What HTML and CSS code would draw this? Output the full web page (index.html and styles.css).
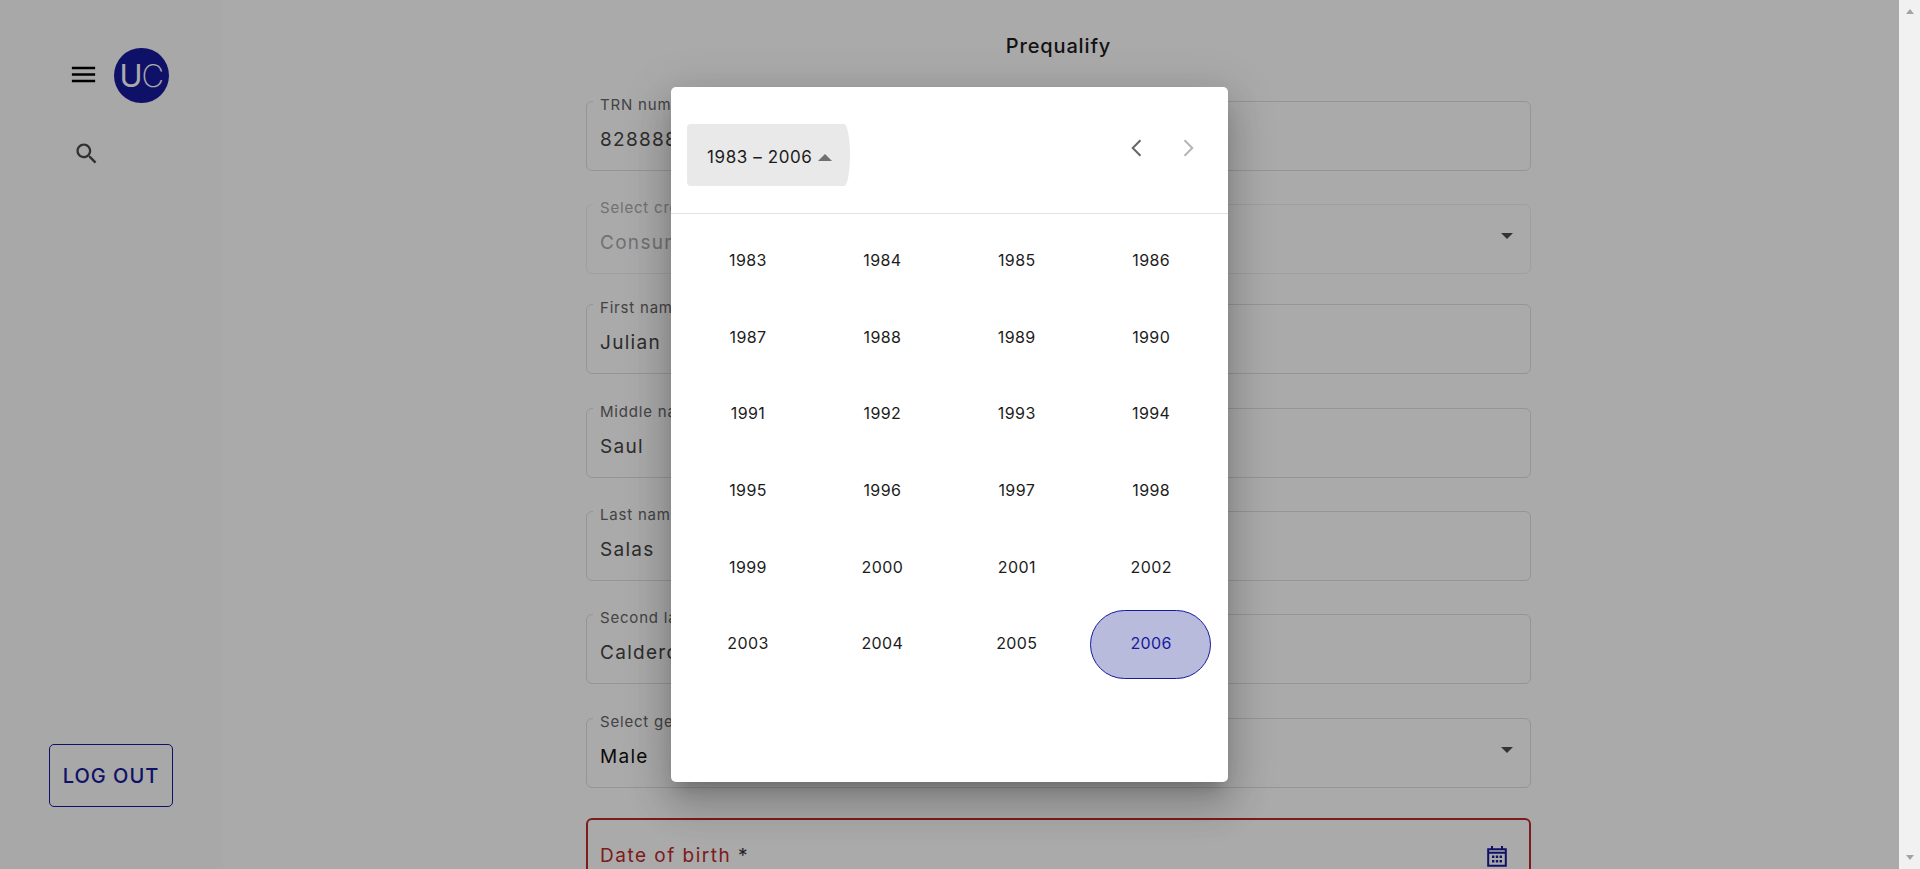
FILE: index.html
```html
<!DOCTYPE html>
<html lang="en">
<head>
<meta charset="utf-8">
<title>Prequalify</title>
<link rel="stylesheet" href="styles.css">
</head>
<body>
<div class="page">
  <aside class="sidebar">
    <div class="brand">
      <svg class="icon-menu" viewBox="0 0 24 24"><path d="M3 18h18v-2H3v2zm0-5h18v-2H3v2zm0-7v2h18V6H3z"/></svg>
      <div class="logo"><span class="logo-u">U</span><span class="logo-c">C</span></div>
    </div>
    <svg class="icon-search" viewBox="0 0 24 24"><path d="M15.5 14h-.79l-.28-.27C15.41 12.59 16 11.11 16 9.5 16 5.91 13.09 3 9.5 3S3 5.91 3 9.5 5.91 16 9.5 16c1.61 0 3.09-.59 4.23-1.57l.27.28v.79l5 4.99L20.49 19l-4.99-5zm-6 0C7.01 14 5 11.99 5 9.5S7.01 5 9.5 5 14 7.01 14 9.5 11.99 14 9.5 14z"/></svg>
    <button class="logout">LOG OUT</button>
  </aside>
  <main class="main">
    <h1 class="title">Prequalify</h1>
    <div class="field"><span class="field-label">TRN number *</span><span class="field-value">828888888</span></div>
    <div class="field field-select field-disabled"><span class="field-label">Select credit type</span><span class="field-value">Consumer</span><span class="caret-down"></span></div>
    <div class="field"><span class="field-label">First name *</span><span class="field-value">Julian</span></div>
    <div class="field"><span class="field-label">Middle name</span><span class="field-value">Saul</span></div>
    <div class="field"><span class="field-label">Last name *</span><span class="field-value">Salas</span></div>
    <div class="field"><span class="field-label">Second last name</span><span class="field-value">Calderon</span></div>
    <div class="field field-select"><span class="field-label">Select gender *</span><span class="field-value field-value-strong">Male</span><span class="caret-down"></span></div>
    <div class="field field-error">
      <span class="error-label">Date of birth <span class="required">*</span></span>
      <svg class="icon-calendar" viewBox="0 0 20 22"><path class="cal-line" d="M1.2 4.2h17.6v16.6H1.2zM1.2 7.8h17.6M5 1v3M15 1v3"/><path class="cal-dots" d="M5 10.5h2.4v2.4H5zM8.8 10.5h2.4v2.4H8.8zM12.6 10.5H15v2.4h-2.4zM5 15h2.4v2.4H5zM8.8 15h2.4v2.4H8.8zM12.6 15H15v2.4h-2.4z"/></svg>
    </div>
  </main>
  <div class="overlay">
    <div class="modal" role="dialog">
      <header class="modal-head">
        <button class="range-btn"><span>1983 – 2006</span><span class="caret-up"></span></button>
        <div class="nav">
          <svg class="chev chev-on" viewBox="0 0 24 24"><path d="M14.6 6.2 8.8 12l5.8 5.8"/></svg>
          <svg class="chev chev-off" viewBox="0 0 24 24"><path d="M9.4 6.2 15.2 12l-5.8 5.8"/></svg>
        </div>
      </header>
      <div class="years">
        <div class="year">1983</div><div class="year">1984</div><div class="year">1985</div><div class="year">1986</div>
        <div class="year">1987</div><div class="year">1988</div><div class="year">1989</div><div class="year">1990</div>
        <div class="year">1991</div><div class="year">1992</div><div class="year">1993</div><div class="year">1994</div>
        <div class="year">1995</div><div class="year">1996</div><div class="year">1997</div><div class="year">1998</div>
        <div class="year">1999</div><div class="year">2000</div><div class="year">2001</div><div class="year">2002</div>
        <div class="year">2003</div><div class="year">2004</div><div class="year">2005</div><div class="year year-selected">2006</div>
      </div>
    </div>
  </div>
</div>
<div class="scrollbar"><span class="sb-up"></span><span class="sb-down"></span></div>
</body>
</html>
```

FILE: styles.css
```css
* { box-sizing: border-box; }
html, body { height: 100%; }
body {
  margin: 0;
  display: flex;
  height: 869px;
  overflow: hidden;
  background: #fff;
  color: #1c1c1c;
  font-family: Inter, "Liberation Sans", sans-serif;
}
.page {
  position: relative;
  flex: 1;
  display: flex;
  height: 869px;
  overflow: hidden;
}
.sidebar {
  width: 223px;
  flex: none;
  display: flex;
  flex-direction: column;
  align-items: flex-start;
  padding: 48px 0 62px 49px;
  background: #fcfcfc;
}
.brand { display: flex; align-items: center; margin-left: 19px; gap: 15px; }
.icon-menu { width: 31px; height: 31px; margin-bottom: 2px; fill: #000; }
.logo {
  width: 54.5px;
  height: 55px;
  border-radius: 50%;
  background: #161a9b;
  color: #fff;
  display: flex;
  align-items: center;
  justify-content: center;
  font-size: 31px;
  letter-spacing: -1px;
}
.logo-u { font-weight: 400; }
.logo-c { font-weight: 200; }
.icon-search { width: 27.4px; height: 27.4px; margin: 37px 0 0 23.6px; fill: #4a4a4a; }
.logout {
  margin-top: auto;
  width: 124px;
  height: 63px;
  padding: 0;
  border: 1px solid #161a9b;
  border-radius: 5px;
  background: transparent;
  color: #161a9b;
  font: 500 20px Inter, "Liberation Sans", sans-serif;
  letter-spacing: 1px;
}
.main { flex: 1; padding: 34px 368px 0 363px; }
.title {
  margin: 0 0 43px;
  font-size: 20px;
  line-height: 24px;
  font-weight: 500;
  letter-spacing: .85px;
  text-align: center;
}
.field {
  position: relative;
  height: 70px;
  margin-bottom: 33.35px;
  padding: 26px 13px 0;
  border: 1px solid #e0e0e0;
  border-radius: 6px;
  display: block;
}
.field-select { margin-bottom: 30px; }
.field-disabled { border-color: #efefef; }
.field-label {
  position: absolute;
  left: 6px;
  top: -6px;
  padding: 0 7px;
  background: #fff;
  font-size: 15px;
  line-height: 18px;
  letter-spacing: .8px;
  color: #666;
}
.field-value {
  display: block;
  font-size: 19px;
  line-height: 24px;
  letter-spacing: 1.3px;
  color: #444;
}
.field-value-strong { color: #111; }
.field-disabled .field-label { color: #aaa; }
.field-disabled .field-value { color: #aaa; }
.caret-down {
  position: absolute;
  right: 17px;
  top: 28px;
  border-left: 6px solid transparent;
  border-right: 6px solid transparent;
  border-top: 6px solid #4d4d4d;
}
.field-error {
  border: 2px solid #bb2a2a;
  padding: 24px 12px 0;
  display: flex;
  justify-content: space-between;
  align-items: flex-start;
  overflow: visible;
}
.error-label { font-size: 19px; line-height: 24px; letter-spacing: 1.5px; color: #bb2a2a; }
.required { color: #333; }
.icon-calendar { width: 20px; height: 22px; margin: 1px 10px 0 0; flex: none; }
.cal-line { fill: none; stroke: #161a9b; stroke-width: 2; }
.cal-dots { fill: #161a9b; }
.overlay {
  position: absolute;
  inset: 0;
  display: flex;
  align-items: center;
  justify-content: center;
  background: rgba(0, 0, 0, .333);
}
.modal {
  width: 557px;
  height: 695px;
  background: #fff;
  border-radius: 5px;
  box-shadow: 0 11px 15px -7px rgba(0,0,0,.2), 0 24px 38px 3px rgba(0,0,0,.14), 0 9px 46px 8px rgba(0,0,0,.12);
}
.modal-head {
  height: 127px;
  padding: 37px 24px 0 16px;
  border-bottom: 1px solid #e2e2e2;
  display: flex;
  justify-content: space-between;
  align-items: flex-start;
}
.range-btn {
  width: 163px;
  height: 62px;
  padding: 4px 0 0 20px;
  border: 0;
  background: #e9e9e9;
  border-radius: 4px 6px 6px 4px / 4px 31px 31px 4px;
  display: flex;
  align-items: center;
  gap: 5px;
  font: 400 17px Inter, "Liberation Sans", sans-serif;
  letter-spacing: .6px;
  color: #1c1c1c;
}
.caret-up {
  border-left: 7px solid transparent;
  border-right: 7px solid transparent;
  border-bottom: 7px solid #707070;
}
.nav { display: flex; gap: 19px; margin-top: 8px; }
.chev { width: 32px; height: 32px; fill: none; stroke-width: 1.5; }
.chev-on { stroke: #666; }
.chev-off { stroke: #b5b5b5; }
.years {
  display: grid;
  grid-template-columns: repeat(4, 121px);
  grid-auto-rows: 69px;
  column-gap: 13.4px;
  row-gap: 7.7px;
  padding: 13px 16px 0;
}
.year {
  display: flex;
  align-items: center;
  justify-content: center;
  padding: 0 0 3px 1px;
  font-size: 16px;
  letter-spacing: .4px;
  color: #1c1c1c;
  border: 1px solid transparent;
  border-radius: 35px;
}
.year-selected { background: #b8bbdc; border-color: #161a9b; color: #161a9b; }
.scrollbar {
  width: 21px;
  flex: none;
  height: 869px;
  background: #f1f1f1;
  display: flex;
  flex-direction: column;
  justify-content: space-between;
  align-items: center;
  padding: 9px 0;
}
.sb-up, .sb-down { width: 0; height: 0; border-left: 4.5px solid transparent; border-right: 4.5px solid transparent; }
.sb-up { border-bottom: 5px solid #a3a3a3; }
.sb-down { border-top: 5px solid #a3a3a3; }
```
